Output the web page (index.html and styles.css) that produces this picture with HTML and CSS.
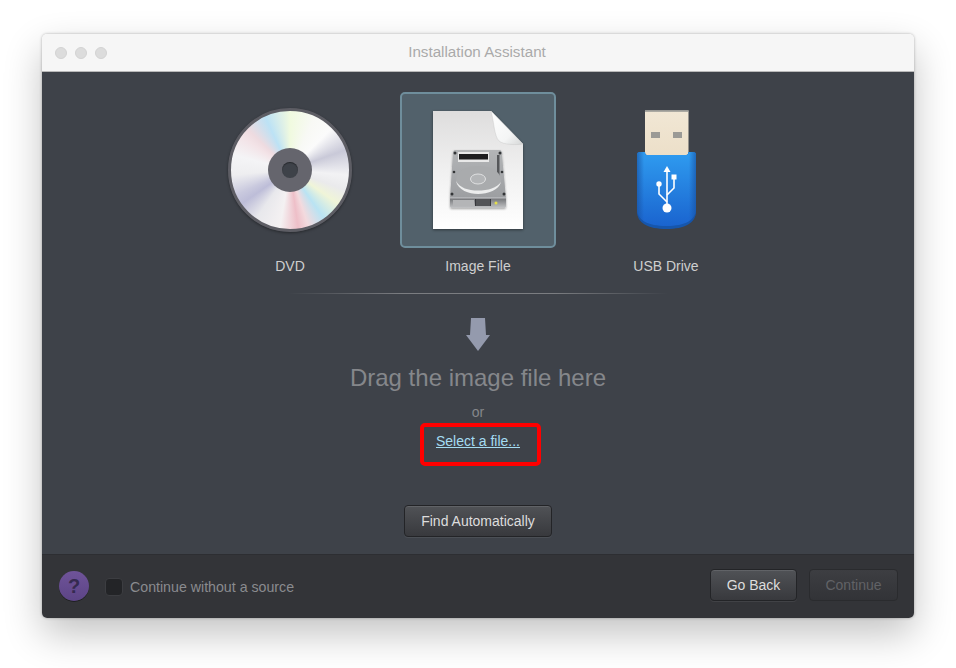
FILE: index.html
```html
<!DOCTYPE html>
<html lang="en">
<head>
<meta charset="utf-8">
<title>Installation Assistant</title>
<link rel="stylesheet" href="styles.css">
</head>
<body>
<div class="window">
  <header class="titlebar">
    <div class="lights"><span class="light"></span><span class="light"></span><span class="light"></span></div>
    <div class="title">Installation Assistant</div>
  </header>
  <main class="content">
    <div class="sources">
      <div class="source">
        <div class="tile">
          <div class="disc"><div class="disc-hub"><div class="disc-hole"></div></div></div>
        </div>
        <div class="source-label">DVD</div>
      </div>
      <div class="source">
        <div class="tile tile-selected">
          <svg class="doc" width="100" height="130" viewBox="0 -4 100 130">
            <defs>
              <linearGradient id="paper" x1="0" y1="0" x2="0" y2="1"><stop offset="0" stop-color="#dedddd"/><stop offset="0.5" stop-color="#f0f0f0"/><stop offset="1" stop-color="#ffffff"/></linearGradient>
              <linearGradient id="fold" x1="0" y1="0" x2="1" y2="1"><stop offset="0" stop-color="#ffffff"/><stop offset="0.65" stop-color="#f4f5f5"/><stop offset="1" stop-color="#d4d6d6"/></linearGradient>
              <linearGradient id="hdd" x1="0" y1="0" x2="0" y2="1"><stop offset="0" stop-color="#b3b5b7"/><stop offset="1" stop-color="#9c9ea1"/></linearGradient>
              <linearGradient id="hddfront" x1="0" y1="0" x2="0" y2="1"><stop offset="0" stop-color="#6f7174"/><stop offset="1" stop-color="#c3c4c6"/></linearGradient>
              <filter id="docshadow" x="-10%" y="-10%" width="120%" height="120%"><feDropShadow dx="0" dy="1" stdDeviation="1.500" flood-color="#000" flood-opacity="0.45"/></filter>
              <filter id="hddshadow" x="-10%" y="-10%" width="120%" height="120%"><feDropShadow dx="0" dy="1" stdDeviation="1" flood-color="#000" flood-opacity="0.35"/></filter>
            </defs>
            <path d="M5 2H63L95 35V120H5Z" fill="url(#paper)" filter="url(#docshadow)"/>
            <path d="M63 2L95 35C88 36 76 36 71 32C66 27 66 12 63 2Z" fill="url(#fold)" stroke="#c4c5c5" stroke-width="0.4"/>
            <g filter="url(#hddshadow)">
              <path d="M27 41H72C73 41 73.500 42 73.700 43L78 89H22L25 43C25.200 42 26 41 27 41Z" fill="url(#hdd)"/>
              <path d="M22 89H78V97C78 98.500 77 99 76 99H24C23 99 22 98.500 22 97Z" fill="url(#hddfront)"/>
            </g>
            <path d="M22 89H78" stroke="#d2d3d5" stroke-width="0.800"/>
            <rect x="25" y="91" width="21" height="6" fill="#b4b5b7"/>
            <rect x="47" y="90" width="16" height="7" fill="#35363a"/>
            <path d="M49 90V97M51 90V97M53 90V97M55 90V97M57 90V97M59 90V97M61 90V97" stroke="#8d8e90" stroke-width="0.700"/>
            <circle cx="68" cy="94" r="1.500" fill="#e5df4a"/>
            <path d="M30 43H61V53H30Z" fill="#e8e8e8"/>
            <rect x="31" y="45" width="29" height="5.500" fill="#1d1d1f"/>
            <rect x="69" y="46" width="2.500" height="23" fill="#55575a"/>
            <path d="M28 72C28 61 40 57 50 57C61 57 73 61 73 72C73 80 62 84 50 84C38 84 28 80 28 72Z" fill="#a9abad"/>
            <path d="M28 72C30 81 41 85 50 85C60 85 71 81 73 73C69 79 60 81.500 50 81.500C40 81.500 32 79 28 72Z" fill="#eceded"/>
            <ellipse cx="50" cy="70" rx="7.500" ry="5" fill="#b3b5b7" stroke="#e0e1e2" stroke-width="1"/>
            <g fill="#333537"><circle cx="27" cy="44" r="1.500"/><circle cx="72" cy="44" r="1.500"/><circle cx="26" cy="63" r="1.300"/><circle cx="74" cy="63" r="1.300"/><circle cx="24" cy="85" r="1.500"/><circle cx="76" cy="85" r="1.500"/></g>
          </svg>
        </div>
        <div class="source-label">Image File</div>
      </div>
      <div class="source">
        <div class="tile">
          <svg class="usb" width="62" height="122" viewBox="0 0 62 122">
            <defs>
              <linearGradient id="plug" x1="0" y1="0" x2="0" y2="1"><stop offset="0" stop-color="#f1e7d5"/><stop offset="1" stop-color="#ecdfc8"/></linearGradient>
              <linearGradient id="body" x1="0" y1="0" x2="0" y2="1"><stop offset="0" stop-color="#2f9cf0"/><stop offset="1" stop-color="#1a64cf"/></linearGradient>
              <linearGradient id="side" x1="0" y1="0" x2="1" y2="0"><stop offset="0" stop-color="#174f9e" stop-opacity="0.65"/><stop offset="0.12" stop-color="#174f9e" stop-opacity="0"/><stop offset="0.88" stop-color="#174f9e" stop-opacity="0"/><stop offset="1" stop-color="#174f9e" stop-opacity="0.65"/></linearGradient>
            </defs>
            <path d="M10 2.500C10 1.500 11 1 12 1H52C53 1 53.500 1.500 53.500 2.500V48H10Z" fill="url(#plug)"/>
            <rect x="10" y="1" width="43.500" height="1.800" fill="#9a9a96"/>
            <rect x="16" y="23" width="9" height="6" fill="#9b9a96"/>
            <rect x="38" y="23" width="9" height="6" fill="#9b9a96"/>
            <path d="M2 46C2 44 3 43 5 43H10C10 45.500 11 46 13 46H50C52 46 53.500 45.500 53.500 43H58C60 43 61 44 61 46V102C61 114 50 120 31.500 120C13 120 2 114 2 102Z" fill="#1656ac"/>
            <path d="M2 46C2 44 3 43 5 43H10C10 45.500 11 46 13 46H50C52 46 53.500 45.500 53.500 43H58C60 43 61 44 61 46V100C61 111 50 117 31.500 117C13 117 2 111 2 100Z" fill="url(#body)"/>
            <path d="M2 46C2 44 3 43 5 43H10C10 45.500 11 46 13 46H50C52 46 53.500 45.500 53.500 43H58C60 43 61 44 61 46V102C61 114 50 120 31.500 120C13 120 2 114 2 102Z" fill="url(#side)"/>
            <g fill="none" stroke="#fff" stroke-width="1.600">
              <path d="M32 62V100"/>
              <path d="M39 70V79L32 86"/>
              <path d="M24 76V85L32 93"/>
            </g>
            <path d="M32 57L35.500 63H28.500Z" fill="#fff"/>
            <rect x="36.500" y="65.500" width="5" height="5" fill="#fff"/>
            <circle cx="24" cy="75" r="2.700" fill="#fff"/>
            <circle cx="32" cy="99" r="4.500" fill="#fff"/>
          </svg>
        </div>
        <div class="source-label">USB Drive</div>
      </div>
    </div>
    <div class="divider"></div>
    <svg class="arrow" width="24" height="33" viewBox="0 0 24 33"><path d="M5 0H19L20 17H24L12 33L0 17H4Z" fill="#949aad"/></svg>
    <div class="drag-text">Drag the image file here</div>
    <div class="or-text">or</div>
    <div class="select-wrap">
      <a class="select-link" href="#">Select a file...</a>
      <div class="highlight"></div>
    </div>
    <button class="btn btn-find" type="button">Find Automatically</button>
  </main>
  <footer class="footer">
    <div class="help">?</div>
    <label class="check-row"><span class="checkbox"></span><span class="check-label">Continue without a source</span></label>
    <div class="footer-actions">
      <button class="btn btn-back" type="button">Go Back</button>
      <button class="btn btn-continue" type="button" disabled>Continue</button>
    </div>
  </footer>
</div>
</body>
</html>
```
FILE: styles.css
```css
* { box-sizing: border-box; }
html, body { margin: 0; padding: 0; }
body {
  width: 956px;
  height: 668px;
  overflow: hidden;
  background: #ffffff;
  padding: 34px 42px 0;
  font-family: "Liberation Sans", Arial, sans-serif;
}
.window {
  width: 872px;
  height: 584px;
  border-radius: 5px;
  overflow: hidden;
  display: flex;
  flex-direction: column;
  box-shadow: 0 16px 38px rgba(0, 0, 0, 0.24), 0 0 3px rgba(0, 0, 0, 0.3);
}
.titlebar {
  height: 38px;
  flex: none;
  display: flex;
  align-items: center;
  position: relative;
  background: #f6f6f6;
  border-bottom: 1px solid #b9b9b9;
}
.lights { display: flex; gap: 8px; padding-left: 13px; }
.light { width: 12px; height: 12px; border-radius: 50%; background: #dcdcdc; border: 1px solid #d3d3d3; }
.title {
  position: absolute;
  left: 0;
  right: 0;
  text-align: center;
  font-size: 15.2px;
  color: #aaaaaa;
  top: 9px;
  padding-right: 2px;
}
.content {
  flex: 1;
  background: #3e4249;
  display: flex;
  flex-direction: column;
  align-items: center;
  padding-top: 20px;
}
.sources { display: flex; gap: 32px; }
.source { width: 156px; display: flex; flex-direction: column; align-items: center; }
.tile {
  width: 156px;
  height: 156px;
  border-radius: 5px;
  display: flex;
  align-items: center;
  justify-content: center;
  border: 2px solid transparent;
}
.tile-selected { background: #52616b; border-color: #6f8e9c; }
.source-label {
  margin-top: 10px;
  height: 17px;
  line-height: 16px;
  font-size: 14px;
  color: #cfcfcf;
}
.disc {
  width: 124px;
  height: 124px;
  border-radius: 50%;
  border: 3px solid #5d5d64;
  display: flex;
  align-items: center;
  justify-content: center;
  box-shadow: 0 1px 3px rgba(0, 0, 0, 0.4);
  background: conic-gradient(from 0deg,
    #f0fadf 0deg, #f8f9f5 25deg, #fbfbfb 45deg, #c9c9d8 70deg, #f2f2f4 95deg, #eaeaec 110deg,
    #f0f5d8 125deg, #b9e3f3 145deg, #f3dade 162deg, #eebfc8 172deg, #f4f1f2 190deg, #e8e8ec 215deg,
    #bdbdd8 235deg, #c9c9de 245deg, #eeeef0 265deg, #f4f4f6 285deg, #f3e3e7 305deg, #eedbe0 314deg,
    #bce2f5 335deg, #dcefe8 350deg, #f0fadf 360deg);
}
.disc-hub {
  width: 44px;
  height: 44px;
  border-radius: 50%;
  background: #65656d;
  display: flex;
  align-items: center;
  justify-content: center;
}
.disc-hole { width: 16px; height: 16px; border-radius: 50%; background: #3e4249; box-shadow: inset 0 1px 1px rgba(0, 0, 0, 0.4); }
.divider {
  width: 380px;
  height: 1px;
  margin-top: 18px;
  background: linear-gradient(90deg, rgba(130, 130, 130, 0), #7b7d81 30%, #7b7d81 70%, rgba(130, 130, 130, 0));
}
.arrow { margin-top: 24px; display: block; }
.drag-text {
  margin-top: 10px;
  height: 34px;
  line-height: 34px;
  font-size: 24px;
  color: #85878b;
}
.or-text {
  margin-top: 9px;
  height: 16px;
  line-height: 16px;
  font-size: 14px;
  color: #85878b;
}
.select-wrap { position: relative; margin-top: 11px; height: 20px; line-height: 20px; }
.select-link { font-size: 14px; color: #a4dcf2; text-decoration: underline; display: block; }
.highlight {
  position: absolute;
  left: -16px;
  right: -21px;
  top: -8px;
  height: 43px;
  border: 4px solid #ff0000;
  border-radius: 5px;
}
.btn {
  font-family: inherit;
  font-size: 14px;
  border-radius: 4px;
  height: 32px;
  border: 1px solid #232427;
  color: #dddddd;
  background: linear-gradient(180deg, #505256, #38393d);
  box-shadow: inset 0 1px 0 rgba(255, 255, 255, 0.1), 0 1px 0 rgba(255, 255, 255, 0.07);
  padding: 0;
}
.btn-find { width: 148px; margin-top: 54px; }
.footer {
  height: 64px;
  flex: none;
  display: flex;
  align-items: center;
  background: #333438;
  border-top: 1px solid #2d2e32;
  padding: 0 17px;
}
.help {
  width: 30px;
  height: 30px;
  border-radius: 50%;
  background: linear-gradient(180deg, #6f5399, #5c4486);
  box-shadow: 0 1px 0 rgba(0, 0, 0, 0.4);
  color: #352a50;
  font-weight: bold;
  font-size: 20px;
  text-align: center;
  line-height: 30px;
  flex: none;
  margin-top: -2px;
}
.check-row { display: flex; align-items: center; margin-left: 16px; }
.checkbox {
  width: 18px;
  height: 18px;
  border-radius: 4px;
  background: #232427;
  border: 1px solid #3c3d41;
}
.check-label { margin-left: 7px; font-size: 14.2px; color: #8a8b8f; }
.footer-actions { margin-left: auto; display: flex; gap: 12px; margin-top: -4px; margin-right: -1px; }
.btn-back { width: 87px; }
.btn-continue {
  width: 89px;
  color: #616266;
  background: linear-gradient(180deg, #3d3e42, #323337);
  border-color: #2a2b2e;
  box-shadow: none;
}
```
